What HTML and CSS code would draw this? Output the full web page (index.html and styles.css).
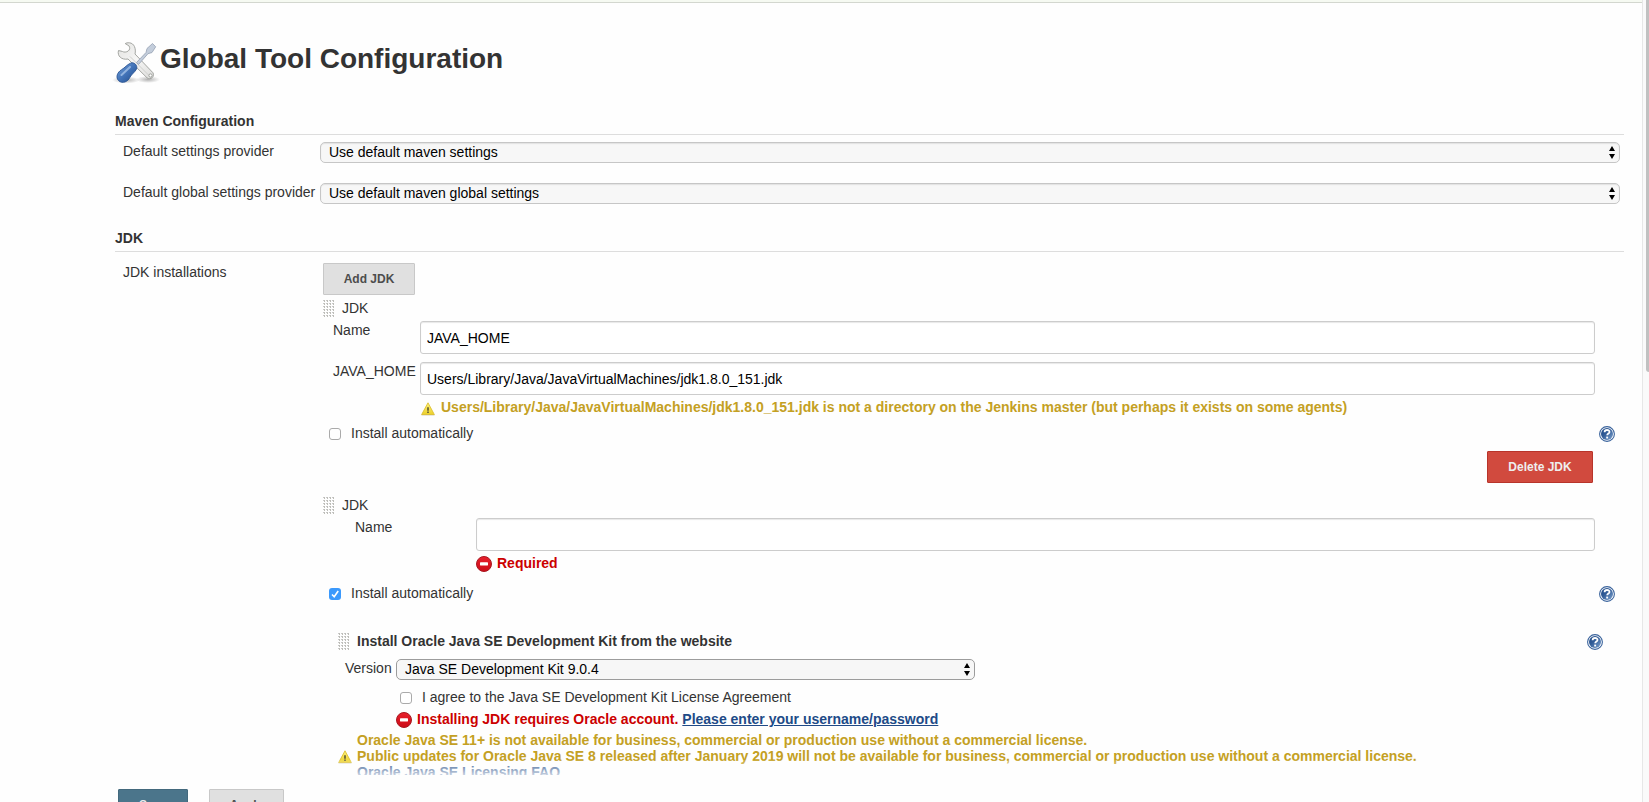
FILE: index.html
```html
<!DOCTYPE html>
<html lang="en">
<head>
<meta charset="utf-8">
<title>Global Tool Configuration</title>
<link rel="stylesheet" href="styles.css">
</head>
<body>
<svg class="defs" width="0" height="0">
  <defs>
    <linearGradient id="gy" x1="0" y1="0" x2="0" y2="1"><stop offset="0" stop-color="#fdf27a"/><stop offset="1" stop-color="#ecd02a"/></linearGradient>
    <linearGradient id="gr" x1="0" y1="0" x2="0" y2="1"><stop offset="0" stop-color="#e8202c"/><stop offset="1" stop-color="#cc0c18"/></linearGradient>
    <linearGradient id="gb" x1="0" y1="0" x2="1" y2="1"><stop offset="0" stop-color="#1f4a87"/><stop offset=".4" stop-color="#2f5a96"/><stop offset="1" stop-color="#7fa3cf"/></linearGradient>
    <linearGradient id="gh" x1="0" y1="0" x2="1" y2="1"><stop offset="0" stop-color="#7aa6dc"/><stop offset=".5" stop-color="#4273b8"/><stop offset="1" stop-color="#204a87"/></linearGradient>
    <linearGradient id="gw" x1="0" y1="0" x2="1" y2="1"><stop offset="0" stop-color="#e2e2e0"/><stop offset=".5" stop-color="#f6f6f5"/><stop offset="1" stop-color="#dcdcda"/></linearGradient>
    <radialGradient id="gs"><stop offset="0" stop-color="#000" stop-opacity=".3"/><stop offset="1" stop-color="#000" stop-opacity="0"/></radialGradient>
    <pattern id="dots" width="3" height="3" patternUnits="userSpaceOnUse"><rect width="2" height="1" fill="#c9c9c9"/><rect x="1" width="1" height="2" fill="#bdbdb8"/></pattern>
    <symbol id="warn" viewBox="0 0 14 14"><path d="M.5 12.200h13v1.200H.5z" fill="#9a8d55" opacity=".5"/><path d="M7 .8 13.300 12.500H.7z" fill="url(#gy)" stroke="#dcc032" stroke-width=".9" stroke-linejoin="round"/><path d="M6.100 5.200h1.800v3.600H6.100zM6.100 9.600h1.800v1.300H6.100z" fill="#6b6436"/></symbol>
    <symbol id="error" viewBox="0 0 16 16"><circle cx="8" cy="8" r="7.500" fill="url(#gr)" stroke="#a81820"/><rect x="4" y="6.300" width="8" height="3.200" rx=".4" fill="#fff"/></symbol>
    <symbol id="help" viewBox="0 0 16 16"><circle cx="8" cy="8" r="7.400" fill="#fff" stroke="#3a639c" stroke-width="1.100"/><circle cx="8" cy="8" r="6" fill="url(#gb)"/><path d="M5.600 6.200C5.600 3.200 10.600 3.400 10.500 6 10.400 7.600 8.300 7.600 8.200 9.300" fill="none" stroke="#fff" stroke-width="1.800"/><rect x="7.200" y="10.600" width="1.900" height="1.900" fill="#fff"/></symbol>
    <symbol id="grip" viewBox="0 0 11 17"><rect width="11" height="17" fill="url(#dots)"/></symbol>
    <symbol id="updown" viewBox="0 0 6 13"><path d="M3 0 6 5H0zM0 8h6L3 13z" fill="#000"/></symbol>
  </defs>
</svg>
<div class="page">
  <div class="breadcrumb"></div>
  <main class="config">
    <header class="title">
      <svg class="tools" viewBox="0 0 48 48">
        <ellipse cx="14" cy="42" rx="14" ry="3.500" fill="url(#gs)"/><ellipse cx="36" cy="41.500" rx="12" ry="3.500" fill="url(#gs)"/>
        <path d="M6.500 12.500c-1.500 5.500 3 9.700 9.500 8.500L35 39.800c3.500 2.600 8-1 6-5L23 16c1.200-5.300-.8-10.800-5.600-11.200-1.800-.2-3.300.2-4.200.8l3.700 2.200c1.400 1.800.9 4.200-.8 5.300-1.600 1.100-4.200 1.300-5.600.4z" fill="url(#gw)" stroke="#9b9d99" stroke-width=".9" stroke-linejoin="round"/>
        <path d="M18 18.500 37 37.500" stroke="#cfd0cd" fill="none"/>
        <circle cx="38.500" cy="37.500" r="1.600" fill="#fff" stroke="#8e908c" stroke-width=".8"/>
        <path d="M24.500 24.500 34 14.500l1-4 5.500-5 3.200 3.300-3.700 5.700-4 1.200L26.500 26.500z" fill="#c3cddb" stroke="#95a1b3" stroke-width=".8" stroke-linejoin="round"/>
        <path d="M18.500 25.200c3.500-1.700 7.500 2.300 6 5.800-1.200 2.800-5 5.200-6.500 8.200-2 4.500-7.500 7-11.300 3.500-3.400-3.300-1.400-8.500 2.800-11 3.500-2 5.500-5 9-6.500z" fill="url(#gh)" stroke="#2a5594" stroke-width=".9"/>
        <path d="M18 29 9.500 37" stroke="#a9c6ea" stroke-width="2" stroke-linecap="round" opacity=".75"/>
      </svg>
      <h1>Global Tool Configuration</h1>
    </header>

    <h2 class="section">Maven Configuration</h2>
    <div class="field">
      <label class="name">Default settings provider</label>
      <div class="select">Use default maven settings<svg class="arrows"><use href="#updown"/></svg></div>
    </div>
    <div class="field">
      <label class="name">Default global settings provider</label>
      <div class="select">Use default maven global settings<svg class="arrows"><use href="#updown"/></svg></div>
    </div>

    <h2 class="section jdk-section">JDK</h2>
    <div class="installations">
      <div class="name">JDK installations</div>
      <div class="list">
        <button class="btn add">Add JDK</button>

        <section class="tool">
          <div class="handle"><svg class="grip"><use href="#grip"/></svg>JDK</div>
          <div class="row"><label>Name</label><input class="text" value="JAVA_HOME"></div>
          <div class="row"><label>JAVA_HOME</label><input class="text" value="Users/Library/Java/JavaVirtualMachines/jdk1.8.0_151.jdk"></div>
          <div class="note warning indent"><svg class="i14"><use href="#warn"/></svg>Users/Library/Java/JavaVirtualMachines/jdk1.8.0_151.jdk is not a directory on the Jenkins master (but perhaps it exists on some agents)</div>
          <div class="check"><span class="box"></span>Install automatically<svg class="help"><use href="#help"/></svg></div>
          <div class="actions"><button class="btn danger">Delete JDK</button></div>
        </section>

        <section class="tool second">
          <div class="handle"><svg class="grip"><use href="#grip"/></svg>JDK</div>
          <div class="row wide"><label>Name</label><input class="text"></div>
          <div class="note error"><svg class="i16"><use href="#error"/></svg>Required</div>
          <div class="check"><span class="box on"><svg viewBox="0 0 12 12"><path d="M3 6.500 5.200 8.800 9.200 3" fill="none" stroke="#fff" stroke-width="1.600"/></svg></span>Install automatically<svg class="help"><use href="#help"/></svg></div>
        </section>

        <section class="installer">
          <div class="installer-head"><svg class="grip"><use href="#grip"/></svg>Install Oracle Java SE Development Kit from the website<svg class="help"><use href="#help"/></svg></div>
          <div class="version"><label>Version</label><div class="select short">Java SE Development Kit 9.0.4<svg class="arrows"><use href="#updown"/></svg></div></div>
          <div class="agree"><span class="box"></span>I agree to the Java SE Development Kit License Agreement</div>
          <div class="note error account"><svg class="i16"><use href="#error"/></svg><span>Installing JDK requires Oracle account. <a href="#">Please enter your username/password</a></span></div>
          <div class="license">
            <svg class="i14"><use href="#warn"/></svg>
            <div>Oracle Java SE 11+ is not available for business, commercial or production use without a commercial license.<br>Public updates for Oracle Java SE 8 released after January 2019 will not be available for business, commercial or production use without a commercial license.<br><a href="#">Oracle Java SE Licensing FAQ</a></div>
          </div>
        </section>
      </div>
    </div>
  </main>
  <div class="scrollbar"><div class="thumb"></div></div>
  <footer class="bottom-bar">
    <div class="fade"></div>
    <div class="buttons"><button class="btn save">Save</button><button class="btn apply">Apply</button></div>
  </footer>
</div>
</body>
</html>
```
FILE: styles.css
```css
* { box-sizing: border-box; }
body {
  margin: 0;
  background: #fefefe;
  color: #333;
  font: 14px/16px "Liberation Sans", Arial, Helvetica, sans-serif;
}
svg { display: block; flex: none; }
.defs { position: absolute; }
.page { position: relative; height: 802px; overflow: hidden; }
.breadcrumb { height: 3px; margin-right: 7px; background: #f6faf2; border-bottom: 1px solid #d3d7cf; }
.config { width: 1509px; margin-left: 115px; }

.title { display: flex; height: 102px; padding-top: 35px; margin-left: -3px; }
.tools { width: 48px; height: 48px; }
h1 { margin: 5px 0 0; font-size: 28px; line-height: 32px; white-space: nowrap; }
.section {
  margin: 0 0 7px;
  height: 30px;
  padding-top: 8px;
  border-bottom: 1px solid #ddd;
  font-size: 14px;
}
.jdk-section { margin-top: -4px; height: 32px; padding-top: 10px; margin-bottom: 11px; }

.field { display: flex; height: 41px; }
.field .name { width: 205px; padding: 1px 0 0 8px; white-space: nowrap; }
.select {
  position: relative;
  width: 1300px;
  height: 21px;
  padding: 2px 8px 0;
  display: flex;
  justify-content: space-between;
  border: 1px solid #c6c6c6;
  border-radius: 5px;
  background: #f7f7f7;
  box-shadow: inset 0 1px 1px #e2e2e2;
  color: #000;
  line-height: 15px;
}
.arrows { width: 6px; height: 13px; margin: 1px -4px 0 0; }

.installations { display: flex; }
.installations > .name { width: 208px; padding: 1px 0 0 8px; }
.list { width: 1301px; }
.btn {
  display: block;
  height: 32px;
  padding: 0;
  border: 1px solid #c8c8c8;
  border-radius: 1px;
  background: #e0e0e0;
  color: #4d4d4d;
  font: bold 12px/14px "Liberation Sans", Arial, Helvetica, sans-serif;
}
.add { width: 92px; }
.danger { width: 106px; background: #d14a3e; border-color: #b8342a; color: #eee; }

.handle { display: flex; height: 26px; padding-top: 5px; gap: 8px; }
.grip { width: 11px; height: 17px; }
.row { display: flex; height: 41px; }
.row label { width: 97px; padding: 1px 0 0 10px; }
.row.wide label { width: 153px; padding-left: 32px; }
.text {
  width: 1175px;
  height: 33px;
  padding: 0 6px;
  border: 1px solid #ccc;
  border-radius: 3px;
  background: #fff;
  box-shadow: inset 0 1px 1px #e8e8e8;
  color: #000;
  font: inherit;
}
.wide .text { width: 1119px; }
.note { display: flex; height: 16px; font-weight: bold; white-space: nowrap; }
.warning { color: #c4a023; gap: 6px; margin: -4px 0 0 98px; }
.i14 { width: 14px; height: 14px; margin-top: 3px; }
.i16 { width: 16px; height: 16px; margin-top: 1px; }
.error { color: #c00; gap: 5px; margin: -4px 0 0 153px; }
.check { display: flex; height: 17px; margin: 10px 0 0 6px; }
.box { width: 12px; height: 12px; margin: 3px 10px 0 0; border: 1px solid #aaa; border-radius: 3px; background: #fff; flex: none; }
.box.on { border: 0; background: #3b99fc; }
.help { width: 16px; height: 16px; margin: 1px 9px 0 auto; }
.actions { display: flex; justify-content: flex-end; margin: 9px 31px 0 0; }
.second { margin-top: 9px; }
.second .check { margin-top: 14px; }

.installer { margin-left: 15px; }
.installer-head { display: flex; gap: 8px; height: 17px; margin-top: 31px; font-weight: bold; }
.installer-head .help { margin-right: 21px; }
.version { display: flex; margin: 9px 0 0 7px; height: 21px; }
.version label { width: 51px; padding-top: 1px; }
.short { width: 579px; border-color: #9c9c9c; box-shadow: none; }
.agree { display: flex; height: 16px; margin: 9px 0 0 62px; }
.agree .box { margin-right: 10px; }
.account { margin: 6px 0 0 58px; }
.account a { color: #204a87; }
.license { display: flex; gap: 5px; margin-top: 5px; color: #c4a023; font-weight: bold; white-space: nowrap; }
.license .i14 { margin-top: 18px; }
.license a { color: #204a87; }

.scrollbar { position: absolute; top: 0; right: 0; width: 7px; height: 802px; padding-left: 3px; border-left: 1px solid #e7e7e7; background: #fafafa; }
.thumb { height: 372px; background: #c1c1c1; border-radius: 0 0 0 3px; }
.bottom-bar { position: absolute; left: 109px; right: 16px; bottom: 0; height: 42px; }
.fade { height: 15px; background: linear-gradient(rgba(254,254,254,.1), rgba(254,254,254,.75)); }
.buttons { display: flex; gap: 21px; height: 27px; padding: 14px 0 0 9px; background: #fefefe; }
.save { width: 70px; background: #4b758b; border-color: #43697d; color: #eee; }
.apply { width: 75px; }
```
